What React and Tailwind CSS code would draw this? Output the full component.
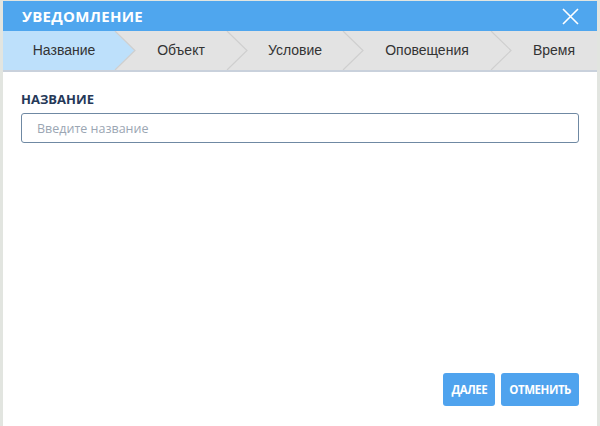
const tabs = [
  { label: 'Название', w: 'w-[112px]', pad: 'pl-[10px]', active: true },
  { label: 'Объект', w: 'w-[112px]', pad: 'pl-[20px]' },
  { label: 'Условие', w: 'w-[116px]', pad: 'pl-[20px]' },
  { label: 'Оповещения', w: 'w-[148px]', pad: 'pl-[20px]' },
  { label: 'Время', w: 'flex-1', pad: 'pl-[20px]', last: true },
];

function Chevron({ active }) {
  return (
    <svg className="absolute top-0 -right-[21px] z-10" width="22" height="39" viewBox="0 0 22 39">
      <polygon points="0,0 1,0 21,19.5 1,39 0,39" fill={active ? '#bde0fb' : '#e3e3e3'} />
      <polyline points="1,0 21,19.5 1,39" fill="none" stroke="#cfcfcf" strokeWidth="1.2" />
    </svg>
  );
}

export default function App() {
  return (
    <div className="w-[600px] h-[426px] bg-[#e2e5e0] pt-px pl-[3px] overflow-hidden">
      <div className="w-[594px] h-[425px] bg-white flex flex-col" style={{ fontFamily: '"Open Sans", sans-serif' }}>
        {/* Header */}
        <div className="h-[30px] bg-[#4fa6ee] flex items-center justify-between pl-[19px] pr-[18px] shrink-0">
          <h1 className="text-white text-[15px] font-bold tracking-[0.02em] leading-none">УВЕДОМЛЕНИЕ</h1>
          <svg width="17" height="17" viewBox="0 0 17 17">
            <path d="M1 1 L16 16 M16 1 L1 16" stroke="white" strokeWidth="1.6" />
          </svg>
        </div>

        {/* Steps */}
        <div className="h-[39px] flex bg-[#e3e3e3] border-b-2 border-[#c9d1dc] box-content shrink-0">
          {tabs.map((t) => (
            <div
              key={t.label}
              className={`relative ${t.w} ${t.pad} h-full flex items-center justify-center ${t.active ? 'bg-[#bde0fb]' : ''}`}
            >
              <span className="text-[14px] text-[#333]" style={{ fontFamily: '"Liberation Sans", Arial, sans-serif' }}>
                {t.label}
              </span>
              {!t.last && <Chevron active={t.active} />}
            </div>
          ))}
        </div>

        {/* Body */}
        <div className="flex-1 flex flex-col px-[18px] pt-[21px] pb-[20px]">
          <label className="text-[13px] font-bold text-[#253858] leading-none mb-[7px]">НАЗВАНИЕ</label>
          <input
            className="h-[30px] border border-[#6f89a3] rounded-[3px] px-[15px] text-[12.5px] text-[#333] placeholder:text-[#9ba6b3] outline-none"
            placeholder="Введите название"
          />
          <div className="flex-1" />
          <div className="flex justify-end gap-[6px]">
            <button className="h-[33px] px-[8px] bg-[#4fa3ee] rounded-[3px] text-white text-[11.5px] font-bold tracking-[-0.04em]">
              ДАЛЕЕ
            </button>
            <button className="h-[33px] px-[8px] bg-[#4fa3ee] rounded-[3px] text-white text-[11.5px] font-bold tracking-[-0.04em]">
              ОТМЕНИТЬ
            </button>
          </div>
        </div>
      </div>
    </div>
  );
}
